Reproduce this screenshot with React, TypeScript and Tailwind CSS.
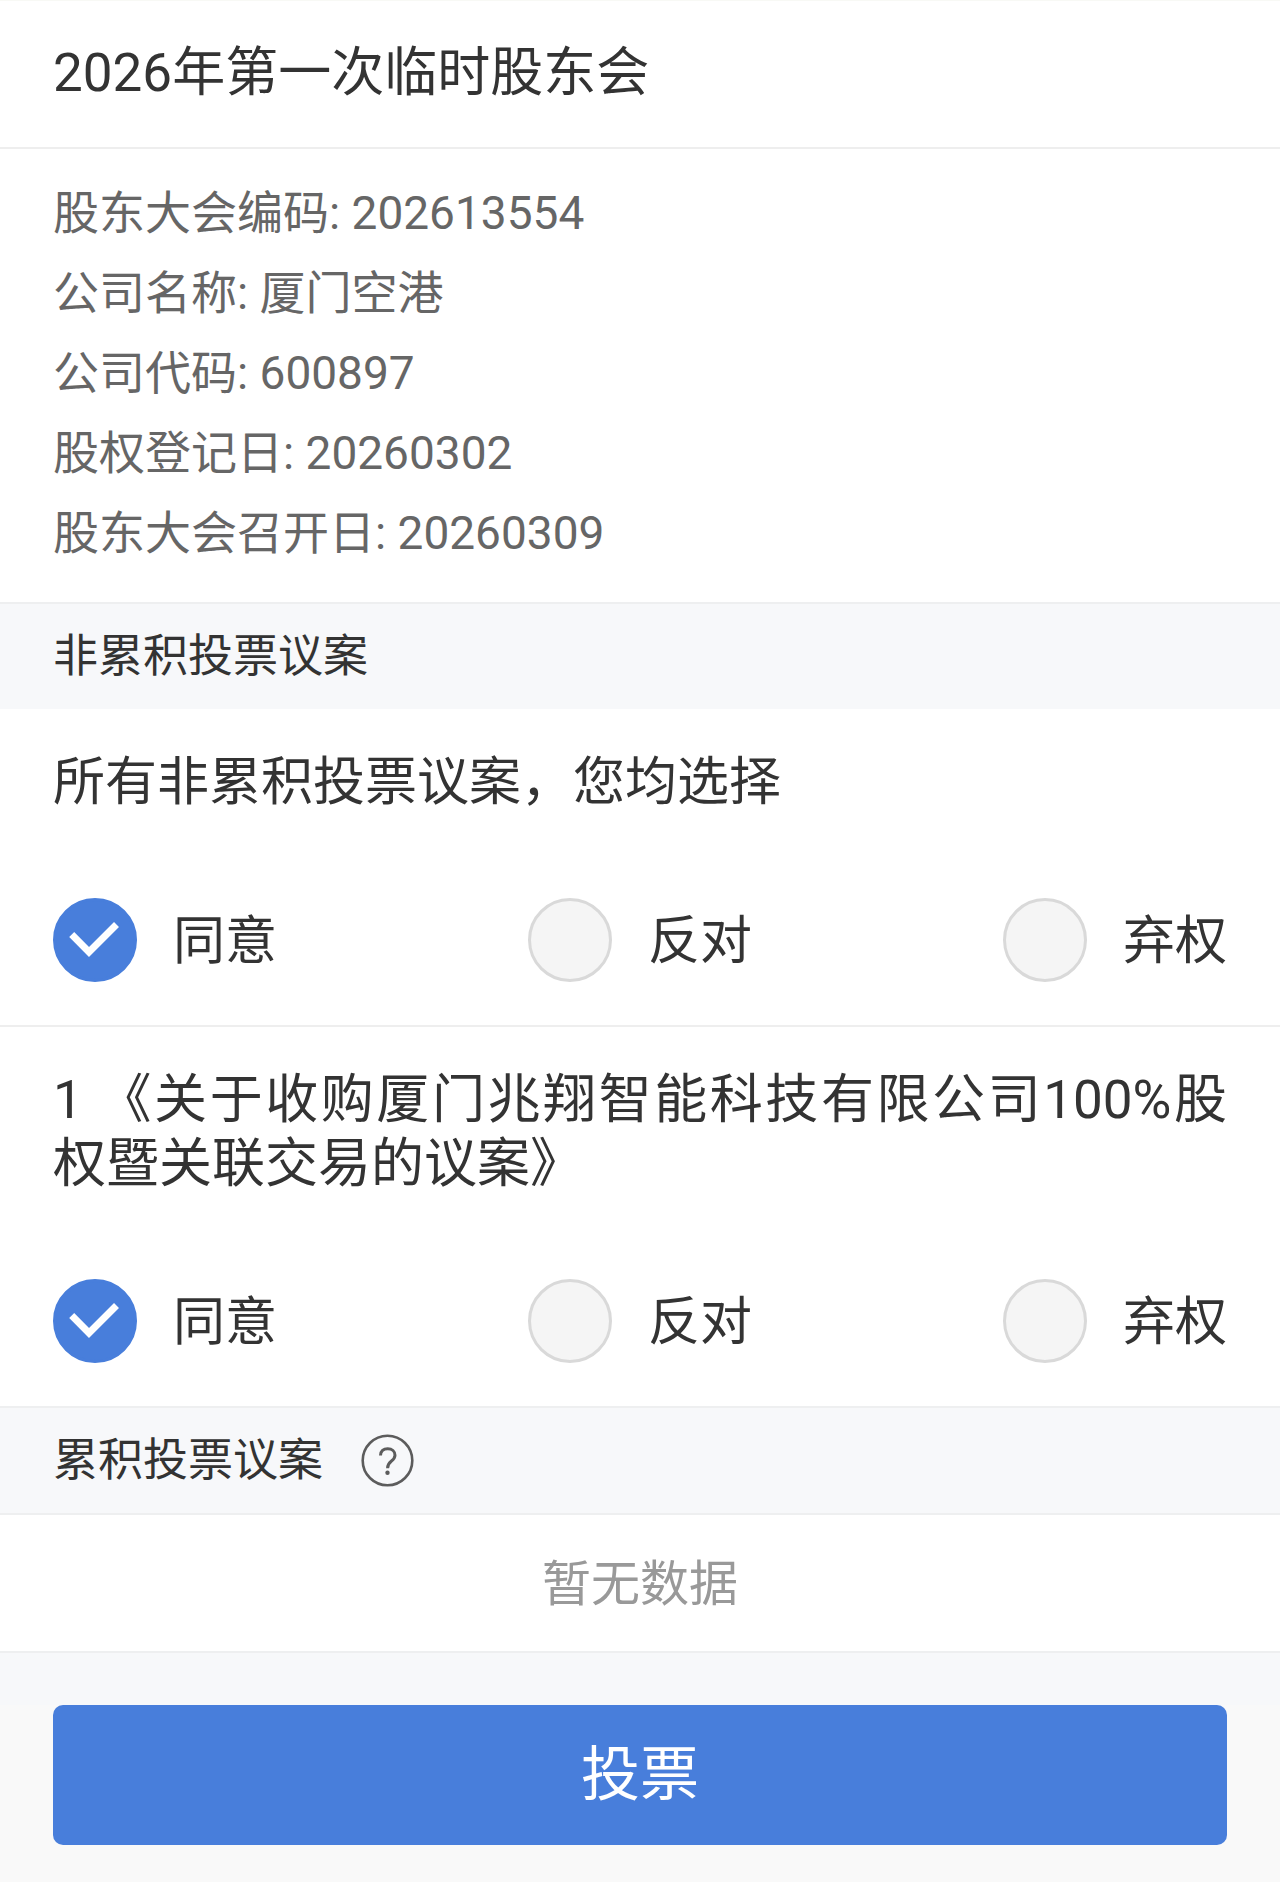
import { useState } from "react";

const choices = ["同意", "反对", "弃权"];

function Check() {
  return (
    <svg viewBox="0 0 84 84" className="pointer-events-none absolute inset-0 hidden size-full peer-checked:block" fill="none" stroke="#fff" strokeWidth="7" aria-hidden="true">
      <path d="M18.7 36.5 L36 54 L63.5 26.5" />
    </svg>
  );
}

function HelpIcon() {
  return (
    <svg viewBox="0 0 53 53" className="size-full" fill="none" stroke="#5c5c5c" strokeWidth="3" aria-hidden="true">
      <circle cx="26.5" cy="26.5" r="24.8" strokeWidth="2.6" />
      <path d="M19.5 21.5 C19.5 17 22.5 14.7 26.7 14.7 C31 14.7 34 17.4 34 21.3 C34 24 32.6 25.4 30.2 27.3 C27.8 29.2 26.6 30.4 26.6 34.2" />
      <circle cx="26.5" cy="38.7" r="2.2" fill="#5c5c5c" stroke="none" />
    </svg>
  );
}

function VoteOptions({ name }: { name: string }) {
  const [value, setValue] = useState("同意");
  return (
    <div className="flex justify-between" role="radiogroup" aria-label={name}>
      {choices.map((c) => (
        <label key={c} className="flex items-center gap-9">
          <span className="relative size-[84px]">
            <input
              type="radio"
              name={name}
              value={c}
              checked={value === c}
              onChange={() => setValue(c)}
              className="peer block size-full appearance-none rounded-full border-[3px] border-[#d9d9d9] bg-[#f5f5f5] checked:border-[#487edb] checked:bg-[#487edb]"
            />
            <Check />
          </span>
          <span className="pt-1 text-[52px] leading-[60px]">{c}</span>
        </label>
      ))}
    </div>
  );
}

const details = [
  ["股东大会编码", "202613554"],
  ["公司名称", "厦门空港"],
  ["公司代码", "600897"],
  ["股权登记日", "20260302"],
  ["股东大会召开日", "20260309"],
];

export default function App() {
  return (
    <main className="min-h-screen bg-[#f9f9f9] font-[Roboto,'Noto_Sans_CJK_SC',sans-serif] text-[#333]">
      <header className="border-t border-b-2 border-t-[#f8f9f5] border-b-[#eee] bg-white px-[53px] pt-9 pb-[38px]">
        <h1 className="text-[53px] leading-[72px]">2026年第一次临时股东会</h1>
      </header>
      <section className="bg-white px-[53px] pt-6 pb-[29px] text-[46px] leading-[80px] text-[#666]">
        {details.map(([k, v]) => (
          <p key={k}>{k}: {v}</p>
        ))}
      </section>
      <h2 className="border-t-2 border-[#eeeff0] bg-[#f7f8fa] px-[53px] py-5 text-[45px] leading-[65px]">非累积投票议案</h2>
      <section className="border-b-2 border-[#eee] bg-white px-[53px] pt-[42px] pb-[43px]">
        <h3 className="mb-[83px] text-[52px] leading-[64px]">所有非累积投票议案，您均选择</h3>
        <VoteOptions name="所有非累积投票议案" />
      </section>
      <section className="bg-white px-[53px] pt-[41px] pb-[43px]">
        <h3 className="mb-[83px] text-justify text-[53px] leading-[64px]">1 《关于收购厦门兆翔智能科技有限公司100%股权暨关联交易的议案》</h3>
        <VoteOptions name="议案1" />
      </section>
      <div className="flex items-center gap-[38px] border-y-2 border-[#eeeff0] bg-[#f7f8fa] px-[53px] py-5">
        <h2 className="text-[45px] leading-[65px]">累积投票议案</h2>
        <button aria-label="说明" className="size-[53px] rounded-full">
          <HelpIcon />
        </button>
      </div>
      <p className="bg-white pt-[38px] pb-[34px] text-center text-[49px] leading-[64px] text-[#999]">暂无数据</p>
      <div className="h-[54px] border-t-2 border-[#eeeff0] bg-[#f7f8fa]" />
      <footer className="px-[53px] pb-[37px]">
        <button className="block w-full rounded-[10px] bg-[#487edb] py-8 text-[59px] leading-[76px] text-white">投票</button>
      </footer>
    </main>
  );
}
